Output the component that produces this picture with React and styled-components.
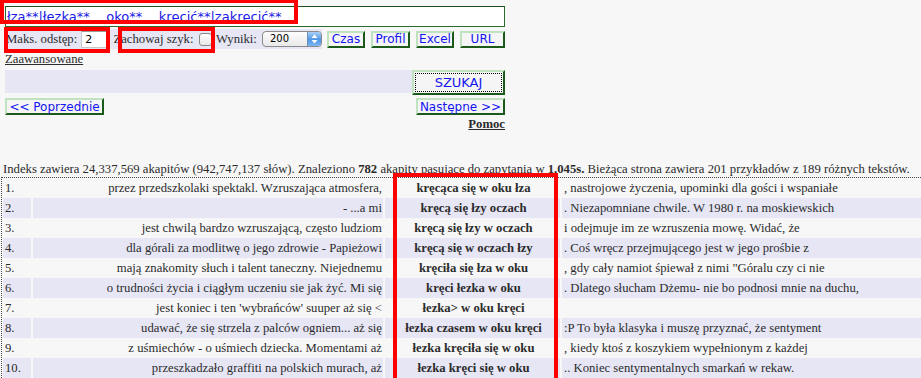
import React from "react";
import styled, { createGlobalStyle } from "styled-components";

const GlobalStyle = createGlobalStyle`
  html, body {
    margin: 0;
    padding: 0;
    background: #f7f7f7;
    overflow: hidden;
  }
  body {
    font-family: "Liberation Serif", "Times New Roman", serif;
    font-size: 12.7px;
    color: #2b2b2b;
  }
`;

const Page = styled.div`
  position: relative;
  width: 921px;
  height: 378px;
  overflow: hidden;
`;

const Form = styled.div`
  width: 500px;
  padding: 6px 0 0 5px;
`;

const QueryInput = styled.input`
  display: block;
  box-sizing: border-box;
  width: 500px;
  height: 21px;
  margin: 0;
  padding: 0 0 0 1px;
  background: #fff;
  border: 1px solid #2d6a2d;
  border-top-color: #1d4f1d;
  font-family: "DejaVu Sans", Verdana, sans-serif;
  font-size: 13px;
  color: #1a1ae6;
  white-space: pre;
  outline: none;
`;

const Controls = styled.div`
  display: flex;
  align-items: center;
  height: 20px;
  margin-top: 2px;
`;

const OptionsBand = styled.div`
  display: flex;
  align-items: center;
  width: 317px;
  height: 20px;
  background: #e6e6f5;
  white-space: nowrap;
`;

const Label = styled.span`
  margin: ${(p) => p.$m || "0"};
`;

const SmallInput = styled.div`
  box-sizing: border-box;
  width: 29px;
  height: 17px;
  margin: 0 4px 0 4px;
  padding: 1px 0 0 3px;
  background: #fff;
  border: 1px solid #c8c8c8;
  border-top-color: #999;
  font-family: "DejaVu Sans", sans-serif;
  font-size: 11px;
  color: #000;
`;

const CheckBox = styled.span`
  display: inline-block;
  width: 11px;
  height: 11px;
  margin: 0 4px 0 6px;
  border: 1px solid #888;
  border-radius: 3px;
  background: linear-gradient(#fff, #e8e8e8);
`;

const Select = styled.div`
  display: flex;
  box-sizing: border-box;
  width: 62px;
  height: 16px;
  margin-left: 5px;
  border: 1px solid #8a8a8a;
  border-radius: 4px;
  overflow: hidden;
  background: linear-gradient(#fdfdfd, #e9e9e9);
  font-family: "DejaVu Sans", sans-serif;
  font-size: 10px;
  color: #000;
`;

const SelectValue = styled.span`
  flex: 1;
  padding: 1px 0 0 7px;
`;

const SelectArrows = styled.span`
  display: flex;
  align-items: center;
  justify-content: center;
  width: 13px;
  background: linear-gradient(#a9d0f5, #4d97e6 55%, #7fb8f2);
  border-left: 1px solid #6b8fb8;
`;

const Button = styled.div`
  box-sizing: border-box;
  display: flex;
  align-items: center;
  justify-content: center;
  width: ${(p) => p.$w}px;
  height: ${(p) => p.$h || 17}px;
  margin-left: ${(p) => p.$ml || 0}px;
  background: #f5f5f5;
  border: 2px solid #1c5a1c;
  border-top-color: #bfe3bf;
  border-left-color: #bfe3bf;
  font-family: "DejaVu Sans", Verdana, sans-serif;
  font-size: ${(p) => p.$fs || 12}px;
  color: #1414f0;
  white-space: pre;
`;

const FocusRing = styled.span`
  display: flex;
  align-items: center;
  justify-content: center;
  box-sizing: border-box;
  width: calc(100% - 2px);
  height: calc(100% - 2px);
  border: 1px dotted #000;
`;

const AdvancedLink = styled.a`
  display: block;
  margin-top: 3px;
  color: #2b2b2b;
  text-decoration: underline;
  line-height: 14px;
`;

const SearchRow = styled.div`
  display: flex;
  margin-top: 4px;
  height: 25px;
`;

const SearchBand = styled.div`
  flex: 1;
  height: 23px;
  background: #e6e6f5;
`;

const NavRow = styled.div`
  display: flex;
  justify-content: space-between;
  margin-top: 3px;
`;

const HelpLink = styled.a`
  display: block;
  margin-top: 2px;
  text-align: right;
  font-weight: bold;
  color: #2b2b2b;
  text-decoration: underline;
  line-height: 15px;
`;

const Summary = styled.p`
  margin: 30px 0 0 3px;
  line-height: 15px;
  white-space: nowrap;
`;

const Results = styled.div`
  margin-left: 1px;
  border-top: 1px dotted #444;
  border-left: 1px dotted #444;
`;

const ResultRow = styled.div`
  display: grid;
  grid-template-columns: 28px 350px 175px 1fr;
  column-gap: 2px;
  height: 20px;
  padding-left: 1px;
`;

const Cell = styled.div`
  display: flex;
  align-items: center;
  justify-content: ${(p) => p.$align || "flex-start"};
  padding: 0 ${(p) => (p.$align === "flex-end" ? "1px" : "0")} 0 2px;
  background: ${(p) => (p.$shade ? "#e6e6f5" : "transparent")};
  font-weight: ${(p) => (p.$bold ? "bold" : "normal")};
  white-space: nowrap;
  overflow: hidden;
`;

const Highlight = styled.div`
  position: absolute;
  left: ${(p) => p.$x}px;
  top: ${(p) => p.$y}px;
  width: ${(p) => p.$w}px;
  height: ${(p) => p.$h}px;
  box-sizing: border-box;
  border: 4px solid #ff0000;
  pointer-events: none;
`;

const rows = [
  ["przez przedszkolaki spektakl. Wzruszająca atmosfera,", "kręcąca się w oku łza", ", nastrojowe życzenia, upominki dla gości i wspaniałe"],
  ["- ...a mi", "kręcą się łzy oczach", ". Niezapomniane chwile. W 1980 r. na moskiewskich"],
  ["jest chwilą bardzo wzruszającą, często ludziom", "kręcą się łzy w oczach", "i odejmuje im ze wzruszenia mowę. Widać, że"],
  ["dla górali za modlitwę o jego zdrowie - Papieżowi", "kręcą się w oczach łzy", ". Coś wręcz przejmującego jest w jego prośbie z"],
  ["mają znakomity słuch i talent taneczny. Niejednemu", "kręciła się łza w oku", ", gdy cały namiot śpiewał z nimi \"Góralu czy ci nie"],
  ["o trudności życia i ciągłym uczeniu sie jak żyć. Mi się", "kręci łezka w oku", ". Dlatego słucham Dżemu- nie bo podnosi mnie na duchu,"],
  ["jest koniec i ten 'wybrańców' suuper aż się <", "łezka> w oku kręci", ""],
  ["udawać, że się strzela z palców ogniem... aż się", "łezka czasem w oku kręci", ":P To była klasyka i muszę przyznać, że sentyment"],
  ["z uśmiechów - o uśmiech dziecka. Momentami aż", "łezka kręciła się w oku", ", kiedy ktoś z koszykiem wypełnionym z każdej"],
  ["przeszkadzało graffiti na polskich murach, aż", "łezka kręci się w oku", ".. Koniec sentymentalnych smarkań w rekaw."],
];

const Arrows = () => (
  <svg width="7" height="10" viewBox="0 0 7 10">
    <path d="M3.5 0.5 L6.5 4 L0.5 4 Z" fill="#fff" />
    <path d="M3.5 9.5 L6.5 6 L0.5 6 Z" fill="#fff" />
  </svg>
);

export default function App() {
  return (
    <Page>
      <GlobalStyle />
      <Form>
        <QueryInput readOnly value="łza**|łezka**    oko**    kręcić**|zakręcić**" />
        <Controls>
          <OptionsBand>
            <Label $m="0 0 0 1px">Maks. odstęp:</Label>
            <SmallInput>2</SmallInput>
            <Label>Zachowaj szyk:</Label>
            <CheckBox />
            <Label>Wyniki:</Label>
            <Select>
              <SelectValue>200</SelectValue>
              <SelectArrows>
                <Arrows />
              </SelectArrows>
            </Select>
          </OptionsBand>
          <Button $w={38} $ml={5}>Czas</Button>
          <Button $w={39} $ml={6}>Profil</Button>
          <Button $w={38} $ml={6}>Excel</Button>
          <Button $w={45} $ml={6}>URL</Button>
        </Controls>
        <AdvancedLink>Zaawansowane</AdvancedLink>
        <SearchRow>
          <SearchBand />
          <Button $w={93} $h={25} $fs={13}>
            <FocusRing>SZUKAJ</FocusRing>
          </Button>
        </SearchRow>
        <NavRow>
          <Button $w={99}>{"<< Poprzednie"}</Button>
          <Button $w={89}>{"Następne >>"}</Button>
        </NavRow>
        <HelpLink>Pomoc</HelpLink>
      </Form>
      <Summary>
        Indeks zawiera 24,337,569 akapitów (942,747,137 słów). Znaleziono <b>782</b> akapity
        pasujące do zapytania w <b>1.045s.</b> Bieżąca strona zawiera 201 przykładów z 189
        różnych tekstów.
      </Summary>
      <Results>
        {rows.map(([left, key, right], i) => {
          const shade = i % 2 === 1;
          return (
            <ResultRow key={i}>
              <Cell $shade={shade}>{i + 1}.</Cell>
              <Cell $shade={shade} $align="flex-end">{left}</Cell>
              <Cell $shade={shade} $align="center" $bold>{key}</Cell>
              <Cell $shade={shade}>{right}</Cell>
            </ResultRow>
          );
        })}
      </Results>
      <Highlight $x={0} $y={-1} $w={298} $h={25} />
      <Highlight $x={4} $y={27} $w={106} $h={26} />
      <Highlight $x={118} $y={27} $w={97} $h={26} />
      <Highlight $x={393} $y={173} $w={165} $h={210} />
    </Page>
  );
}
